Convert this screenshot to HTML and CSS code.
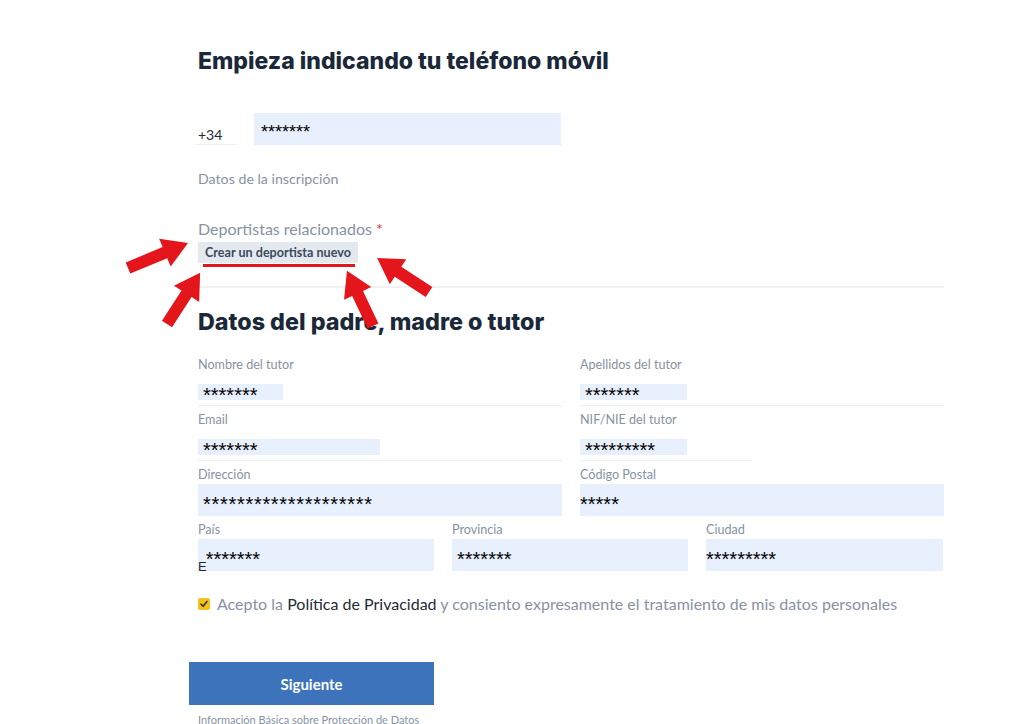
FILE: index.html
```html
<!DOCTYPE html>
<html lang="es">
<head>
<meta charset="utf-8">
<title>Inscripción</title>
<link rel="stylesheet" href="styles.css">
</head>
<body>
<div class="page">
  <form class="form">
    <h1 class="title">Empieza indicando tu teléfono móvil</h1>

    <div class="phone-row">
      <div class="prefix">+34</div>
      <div class="phone-input">*******</div>
    </div>

    <p class="section-note">Datos de la inscripción</p>

    <div class="related">
      <p class="related-label">Deportistas relacionados <span class="req">*</span></p>
      <button type="button" class="btn-new">Crear un deportista nuevo</button>
      <div class="red-line"></div>
    </div>

    <div class="rule"></div>

    <h2 class="title title-2">Datos del padre, madre o tutor</h2>

    <div class="grid-2">
      <div class="field line">
        <label class="lbl">Nombre del tutor</label>
        <div class="val val-small w85">*******</div>
      </div>
      <div class="field line">
        <label class="lbl">Apellidos del tutor</label>
        <div class="val val-small w107">*******</div>
      </div>
      <div class="field line">
        <label class="lbl">Email</label>
        <div class="val val-small w182">*******</div>
      </div>
      <div class="field line short">
        <label class="lbl">NIF/NIE del tutor</label>
        <div class="val val-small w107">*********</div>
      </div>
      <div class="field">
        <label class="lbl">Dirección</label>
        <div class="val val-big wide">********************</div>
      </div>
      <div class="field">
        <label class="lbl">Código Postal</label>
        <div class="val val-big flush">*****</div>
      </div>
    </div>

    <div class="grid-3">
      <div class="field">
        <label class="lbl">País</label>
        <div class="val val-big flush"><span class="ghost">E</span><span class="stars">*******</span></div>
      </div>
      <div class="field">
        <label class="lbl">Provincia</label>
        <div class="val val-big">*******</div>
      </div>
      <div class="field">
        <label class="lbl">Ciudad</label>
        <div class="val val-big flush">*********</div>
      </div>
    </div>

    <div class="consent">
      <span class="check"><svg viewBox="0 0 12 12" width="12" height="12"><path d="M3 6.2 L5.1 8.3 L9 3.6" fill="none" stroke="#3a2c05" stroke-width="1.6" stroke-linecap="round" stroke-linejoin="round"/></svg></span>
      <span class="consent-text">Acepto la <strong class="link">Política de Privacidad</strong> y consiento expresamente el tratamiento de mis datos personales</span>
    </div>

    <button type="button" class="btn-next">Siguiente</button>

    <p class="info">Información Básica sobre Protección de Datos</p>
  </form>

  <svg class="arrows" width="1024" height="724" viewBox="0 0 1024 724" aria-hidden="true">
    <g fill="#e4161b">
      <polygon transform="translate(128 268) rotate(-22.6)" points="0,-6 40,-6 40,-15 65,0 40,15 40,6 0,6"/>
      <polygon transform="translate(167 324) rotate(-57.1)" points="0,-6 36,-6 36,-15 61,0 36,15 36,6 0,6"/>
      <polygon transform="translate(373 326) rotate(-115.3)" points="0,-6 36,-6 36,-15 61,0 36,15 36,6 0,6"/>
      <polygon transform="translate(429 292) rotate(-146.8)" points="0,-6 37,-6 37,-15 62,0 37,15 37,6 0,6"/>
    </g>
  </svg>
</div>
</body>
</html>
```

FILE: styles.css
```css
* { box-sizing: border-box; }

html, body {
  margin: 0;
  padding: 0;
  background: #ffffff;
  height: 724px;
  overflow: hidden;
}

.page {
  position: relative;
  width: 1024px;
  height: 724px;
}

.form {
  width: 746px;
  margin-left: 198px;
  padding-top: 44px;
  font-family: "Lato", "Open Sans", sans-serif;
  color: #8792a2;
}

.title {
  margin: 0;
  font-family: "Inter", "Open Sans", sans-serif;
  font-weight: 800;
  font-size: 23px;
  line-height: 34px;
  color: #1b2839;
}

.phone-row {
  display: flex;
  align-items: flex-end;
  margin-top: 35px;
  height: 32px;
}

.prefix {
  width: 42px;
  margin-left: -3px;
  height: 22px;
  padding-left: 3px;
  padding-top: 2px;
  font-family: "Lato", sans-serif;
  font-size: 14px;
  line-height: 20px;
  color: #1f2a36;
  border-bottom: 1px solid #eef0f3;
}

.phone-input {
  width: 307px;
  height: 32px;
  margin-left: 17px;
  background: #e8f0fe;
  padding: 9px 7px 0;
  font-family: "Liberation Sans", sans-serif;
  font-size: 18px;
  line-height: 20px;
  color: #000;
}

.section-note {
  margin: 24px 0 0;
  font-size: 14.2px;
  line-height: 20px;
}

.related {
  margin-top: 29px;
}

.related-label {
  margin: 0;
  font-size: 16px;
  line-height: 22px;
  color: #8792a2;
}

.req { color: #e03a3a; }

.btn-new {
  display: block;
  margin-top: 2px;
  width: 160px;
  height: 21px;
  padding: 0;
  border: none;
  background: #e4e9f0;
  font-family: "Lato", sans-serif;
  font-weight: 700;
  font-size: 12.6px;
  color: #3b4a5c;
  cursor: pointer;
}

.red-line {
  width: 152px;
  height: 3px;
  margin: 1px 0 0 5px;
  background: #e4161b;
}

.rule {
  height: 2px;
  margin-top: 19px;
  background: #eff1f3;
}

.title-2 {
  margin-top: 17px;
  font-size: 23.3px;
}

.grid-2 {
  display: grid;
  grid-template-columns: 364px 364px;
  column-gap: 18px;
  margin-top: 12px;
}

.grid-3 {
  display: grid;
  grid-template-columns: 236px 236px 237px;
  column-gap: 18px;
}

.field {
  display: flex;
  flex-direction: column;
  align-items: flex-start;
  padding-top: 5px;
}

.field.line {
  padding-bottom: 5px;
  border-bottom: 1px solid #eceff2;
}

.field.short {
  border-bottom: none;
  background: linear-gradient(#eceff2, #eceff2) left bottom / 172px 1px no-repeat;
}

.lbl {
  font-size: 12.6px;
  line-height: 18px;
  color: #8792a2;
}

.val {
  font-family: "Liberation Sans", sans-serif;
  font-size: 20px;
  color: #000;
  background: #e8f0fe;
  white-space: nowrap;
}

.val-small {
  margin-top: 10px;
  height: 16px;
  line-height: 20px;
  padding-left: 5px;
  padding-top: 1px;
  overflow: visible;
}

.w85 { width: 85px; }
.w107 { width: 107px; }
.w182 { width: 182px; }

.val-big {
  width: 100%;
  height: 32px;
  line-height: 32px;
  padding-left: 5px;
  padding-top: 4px;
}

.val-big.flush { padding-left: 0; }

.val-big.wide { letter-spacing: 0.7px; }

.ghost {
  display: inline-block;
  vertical-align: -5px;
  font-size: 13px;
  color: #1f2a36;
}

.stars { margin-left: -1px; }

.consent {
  display: flex;
  align-items: center;
  gap: 7px;
  margin-top: 22px;
}

.check {
  display: inline-flex;
  width: 12px;
  height: 12px;
  border-radius: 2px;
  background: #f3c11b;
  flex: none;
}

.consent-text {
  font-size: 16px;
  line-height: 22px;
  color: #8792a2;
}

.link {
  font-weight: 400;
  color: #1f2a36;
}

.btn-next {
  display: block;
  margin: 47px 0 0 -9px;
  width: 245px;
  height: 43px;
  border: none;
  background: #3d73ba;
  color: #fff;
  font-family: "Lato", sans-serif;
  font-weight: 700;
  font-size: 15px;
  cursor: pointer;
}

.info {
  margin: 8px 0 0;
  font-size: 11px;
  line-height: 14px;
  color: #8792a2;
}

.arrows {
  position: absolute;
  left: 0;
  top: 0;
  pointer-events: none;
}
```
